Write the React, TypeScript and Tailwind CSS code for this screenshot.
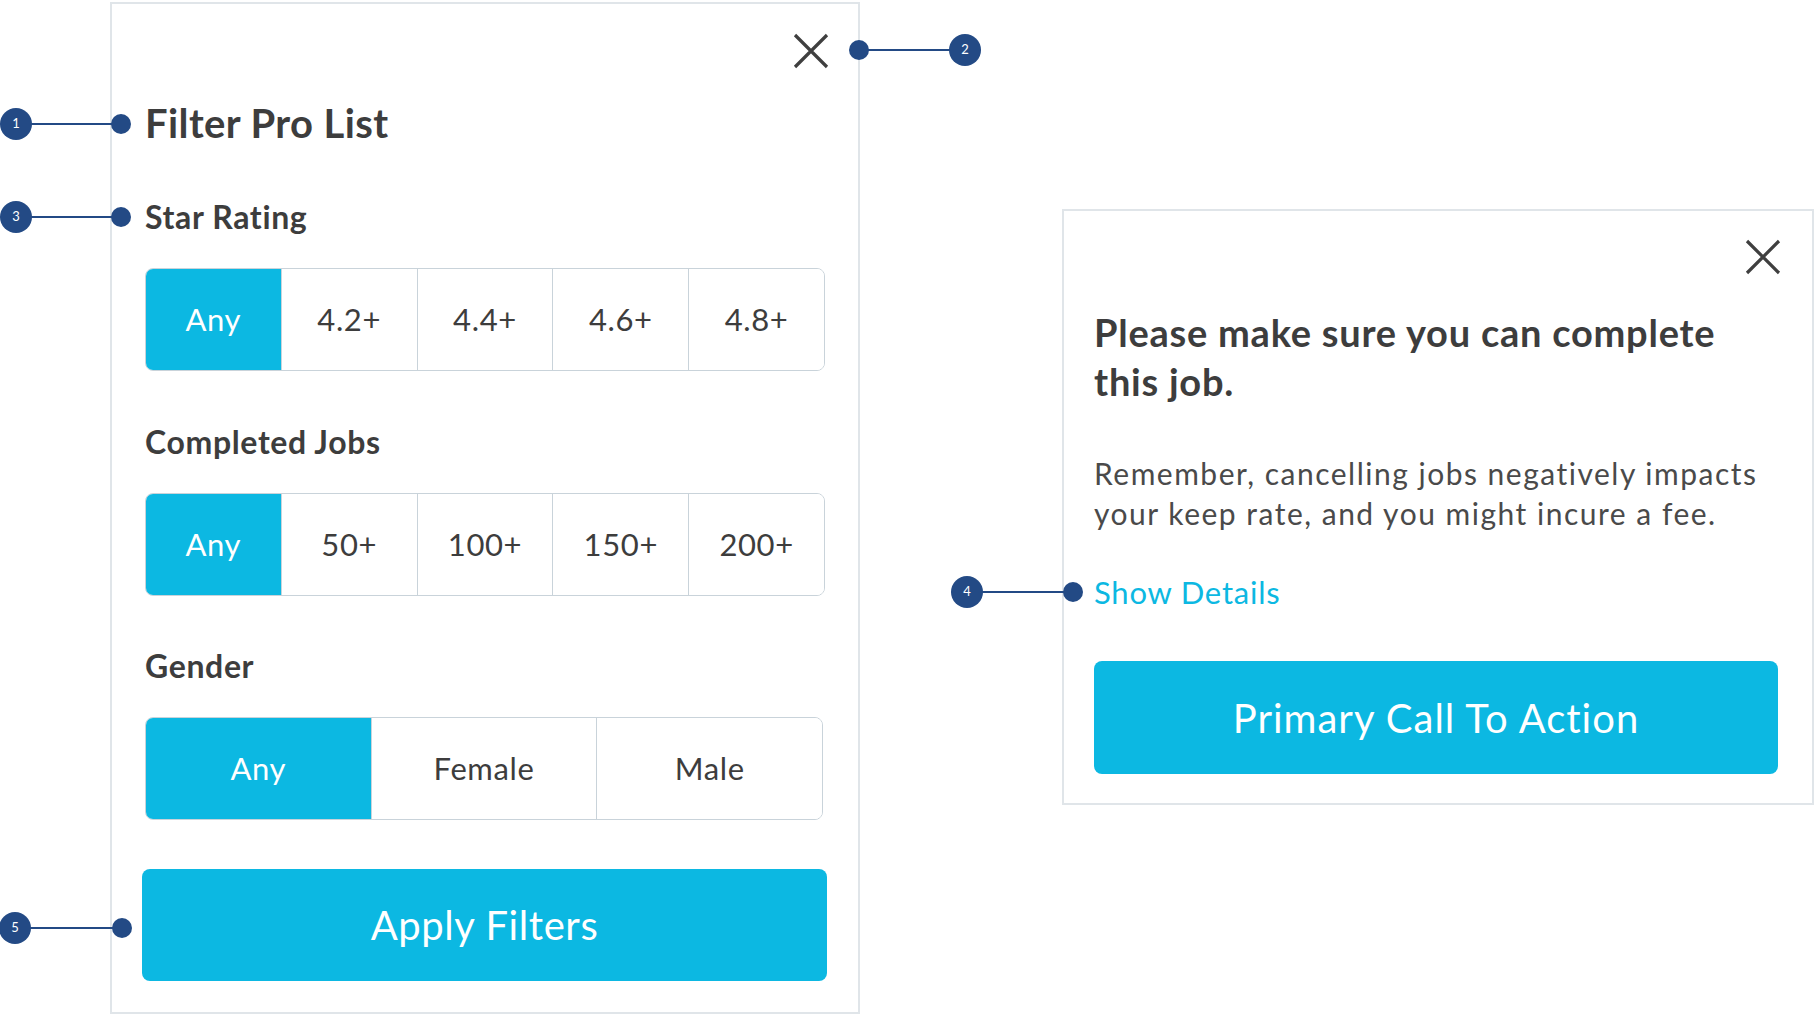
import React from "react";

const CYAN = "bg-[#0cb8e2]";

function CloseIcon() {
  return (
    <svg width="36" height="36" viewBox="0 0 36 36" fill="none">
      <path d="M2 2 L34 34 M34 2 L2 34" stroke="#3f3f3f" strokeWidth="3.2" strokeLinecap="butt" />
    </svg>
  );
}

function Segmented({ items, rowW }: { items: string[]; rowW: string }) {
  return (
    <div className={`flex ${rowW} h-[103px] rounded-[8px] border-[1.5px] border-[#c9d3da] overflow-hidden`}>
      {items.map((t, i) => (
        <div
          key={t}
          className={
            "flex-1 flex items-center justify-center text-[31px] tracking-[0.02em] " +
            (i === 0 ? "bg-[#0cb8e2] text-white" : "bg-white text-[#3d3d3d] border-l border-[#c9d3da]")
          }
        >
          {t}
        </div>
      ))}
    </div>
  );
}

function Callout({ n, x1, x2, y, reverse }: { n: number; x1: number; x2: number; y: number; reverse?: boolean }) {
  const left = Math.min(x1, x2);
  const width = Math.abs(x2 - x1);
  return (
    <div className="absolute h-[32px]" style={{ left: left, top: y - 16, width: width }}>
      <div className="absolute left-0 right-0 top-[15px] h-[2px] bg-[#234a85]" />
      <div
        className="absolute w-[32px] h-[32px] rounded-full bg-[#234a85] flex items-center justify-center text-white text-[13px] top-0"
        style={reverse ? { right: -16 } : { left: -16 }}
      >
        {n}
      </div>
      <div
        className="absolute w-[20px] h-[20px] rounded-full bg-[#234a85] top-[6px]"
        style={reverse ? { left: -10 } : { right: -10 }}
      />
    </div>
  );
}

export default function App() {
  return (
    <div
      className="relative w-[1814px] h-[1016px] bg-white flex items-start overflow-hidden"
      style={{ fontFamily: "Lato, 'Open Sans', sans-serif" }}
    >
      {/* Left panel */}
      <div className="ml-[110px] mt-[2px] w-[750px] h-[1012px] border-2 border-[#e0e5e9] flex flex-col pl-[33px] pr-[29px]">
        <div className="flex justify-end pt-[29px]">
          <CloseIcon />
        </div>
        <h1 className="mt-[31px] text-[40px] leading-[46px] font-bold tracking-[0.01em] text-[#3d3d3d]">Filter Pro List</h1>
        <h2 className="mt-[53px] text-[32px] leading-[36px] font-bold tracking-[0.02em] text-[#3d3d3d]">Star Rating</h2>
        <div className="mt-[33px]">
          <Segmented items={["Any", "4.2+", "4.4+", "4.6+", "4.8+"]} rowW="w-[680px]" />
        </div>
        <h2 className="mt-[53px] text-[32px] leading-[36px] font-bold tracking-[0.02em] text-[#3d3d3d]">Completed Jobs</h2>
        <div className="mt-[33px]">
          <Segmented items={["Any", "50+", "100+", "150+", "200+"]} rowW="w-[680px]" />
        </div>
        <h2 className="mt-[52px] text-[32px] leading-[36px] font-bold tracking-[0.02em] text-[#3d3d3d]">Gender</h2>
        <div className="mt-[33px]">
          <Segmented items={["Any", "Female", "Male"]} rowW="w-[678px]" />
        </div>
        <button className={`mt-[49px] -ml-[3px] w-[685px] h-[112px] rounded-[8px] ${CYAN} text-white text-[40px] tracking-[0.015em]`}>
          Apply Filters
        </button>
      </div>

      {/* Right panel */}
      <div className="ml-[202px] mt-[209px] w-[752px] h-[596px] border-2 border-[#e0e5e9] flex flex-col pl-[30px] pr-[32px]">
        <div className="flex justify-end pt-[28px] -mr-[1px]">
          <CloseIcon />
        </div>
        <h1 className="mt-[33px] text-[38px] leading-[49px] font-bold tracking-[0.02em] text-[#3d3d3d]">
          Please make sure you can complete this job.
        </h1>
        <p className="mt-[47px] text-[30px] leading-[40px] tracking-[0.05em] text-[#4a4a4a]">
          Remember, cancelling jobs negatively impacts your keep rate, and you might incure a fee.
        </p>
        <a className="mt-[41px] text-[31px] leading-[36px] tracking-[0.025em] text-[#0cb8e2] w-fit">Show Details</a>
        <button className={`mt-[51px] w-[684px] h-[113px] rounded-[8px] ${CYAN} text-white text-[40px] tracking-[0.025em]`}>
          Primary Call To Action
        </button>
      </div>

      {/* Callouts */}
      <Callout n={1} x1={16} x2={121} y={124} />
      <Callout n={3} x1={16} x2={121} y={217} />
      <Callout n={5} x1={15} x2={122} y={928} />
      <Callout n={2} x1={859} x2={965} y={50} reverse />
      <Callout n={4} x1={967} x2={1073} y={592} />
    </div>
  );
}
